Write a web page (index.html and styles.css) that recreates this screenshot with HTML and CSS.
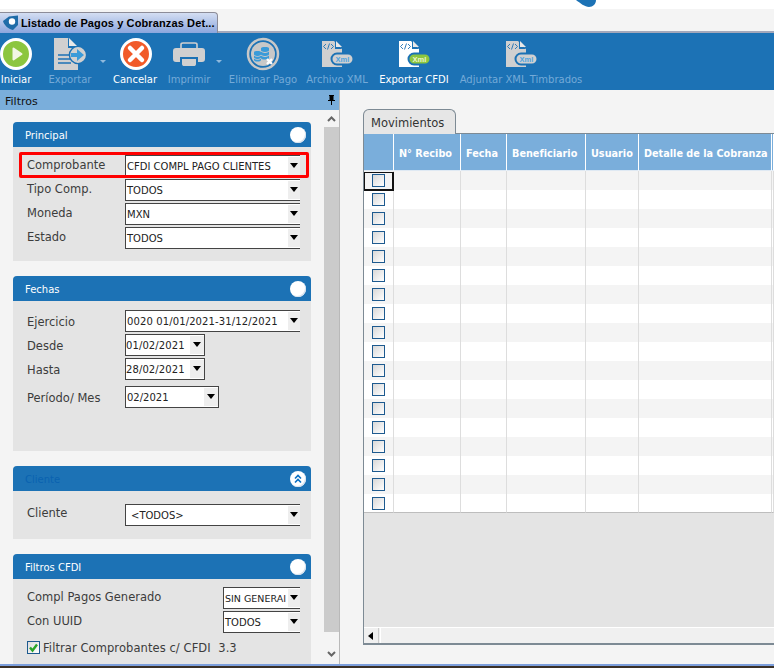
FILE: index.html
```html
<!DOCTYPE html>
<html lang="es">
<head>
<meta charset="utf-8">
<title>Listado de Pagos y Cobranzas</title>
<link rel="stylesheet" href="styles.css">
</head>
<body>
<div class="app">
  <svg class="corner-mark" width="22" height="8" viewBox="0 0 22 8"><path d="M0 0H20C20 4 17 7 13 7C9 7 4 3 0 0Z" fill="#1c72b5"/></svg>
  <div class="top-white"></div>
  <div class="tabstrip">
    <div class="doc-tab">
      <svg class="doc-tab-icon" width="15" height="16" viewBox="0 0 15 16"><path d="M0 6L6 1.500L15 0.500V10L10 15C5 14 1 10 0 6Z" fill="#1f6ca8"/><circle cx="9" cy="6.500" r="3.200" fill="#fff"/></svg>
      <span>Listado de Pagos y Cobranzas Det...</span>
    </div>
  </div>
  <div class="toolbar">
    <div class="tool">
      <svg width="34" height="34" viewBox="0 0 34 34"><circle cx="17" cy="17" r="14.500" fill="#8cc63f" stroke="#fff" stroke-width="3"/><path d="M14.500 11.500L22.500 17L14.500 22.500Z" fill="#f2f6e4" stroke="#f2f6e4" stroke-width="2" stroke-linejoin="round"/></svg>
      <span class="tool-label">Iniciar</span>
    </div>
    <div class="tool off">
      <svg width="34" height="34" viewBox="0 0 34 34"><path d="M1 1H15L25 11V33H1Z" fill="#d0d0d0"/><path d="M15 1V11H25Z" fill="#1c72b5"/><path d="M16 1L24 9H16Z" fill="#e8e8e8"/><path d="M5 18H18M5 22H18M5 26H18" stroke="#1c72b5" stroke-width="1.400"/><circle cx="25" cy="18" r="8.600" fill="#d0d0d0" stroke="#1c72b5" stroke-width="1.400"/><path d="M18 16H24V12L31 18L24 24V20H18Z" fill="#3a9bd9"/></svg>
      <span class="tool-label">Exportar</span>
      <i class="caret"></i>
    </div>
    <div class="tool">
      <svg class="nudge" width="34" height="34" viewBox="0 0 34 34"><circle cx="17" cy="17" r="14.500" fill="#f15a29" stroke="#fff" stroke-width="3"/><path d="M11 11L23 23M23 11L11 23" stroke="#fff" stroke-width="4.500" stroke-linecap="round"/></svg>
      <span class="tool-label">Cancelar</span>
    </div>
    <div class="tool off">
      <svg width="34" height="34" viewBox="0 0 34 34"><path d="M9 11V7.500C9 6.500 10 6 11 6H23C24 6 25 6.500 25 7.500V11" fill="none" stroke="#d0d0d0" stroke-width="1.600"/><path d="M4 11H30C32 11 33 12 33 14V22C33 24 32 25 30 25H26V20H8V25H4C2 25 1 24 1 22V14C1 12 2 11 4 11Z" fill="#d0d0d0"/><path d="M10 22H24V27C24 28.500 23 29 22 29H12C11 29 10 28.500 10 27Z" fill="#d0d0d0"/></svg>
      <span class="tool-label">Imprimir</span>
      <i class="caret caret-far"></i>
    </div>
    <div class="tool off">
      <svg width="34" height="34" viewBox="0 0 34 34"><circle cx="17" cy="17" r="15" fill="#1c72b5" stroke="#c8c8c8" stroke-width="2.500"/><circle cx="17" cy="17" r="12" fill="#c8c8c8"/><path d="M8 15C8 13.500 15 13.500 15 15V23C15 25 8 25 8 23Z" fill="#3a9bd9"/><path d="M15 11C15 9.500 23 9.500 23 11V21C23 23 15 23 15 21Z" fill="#3a9bd9"/><path d="M8 18C10 20 13 20 15 18M8 21C10 23 13 23 15 21M15 14C17 16 21 16 23 14M15 18C17 20 21 20 23 18" fill="none" stroke="#c8c8c8"/><path d="M21 22L26 27M26 22L21 27" stroke="#fff" stroke-width="2.400"/></svg>
      <span class="tool-label">Eliminar Pago</span>
    </div>
    <div class="tool off">
      <svg width="34" height="34" viewBox="0 0 34 34"><path d="M2 4H14L22 12V30H2Z" fill="#d0d0d0"/><path d="M15 4V12H22Z" fill="#1c72b5"/><path d="M16 4L22 10H16Z" fill="#e8e8e8"/><path d="M6 7L3.500 9.500L6 12M11 7L13.500 9.500L11 12M9.500 6.500L7.500 12.500" fill="none" stroke="#1c72b5" stroke-width="0.900"/><rect x="11.500" y="16.500" width="22" height="11" rx="5.500" fill="#d0d0d0" stroke="#1c72b5" stroke-width="2"/><text class="xml-text xml-off" x="22.500" y="24.500">Xml</text></svg>
      <span class="tool-label">Archivo XML</span>
    </div>
    <div class="tool">
      <svg width="34" height="34" viewBox="0 0 34 34"><path d="M2 4H14L22 12V30H2Z" fill="#fff"/><path d="M15 4V12H22Z" fill="#1c72b5"/><path d="M16 4L22 10H16Z" fill="#e8e8e8"/><path d="M6 7L3.500 9.500L6 12M11 7L13.500 9.500L11 12M9.500 6.500L7.500 12.500" fill="none" stroke="#1c72b5" stroke-width="0.900"/><rect x="11.500" y="16.500" width="22" height="11" rx="5.500" fill="#8cc63f" stroke="#1c72b5" stroke-width="2"/><text class="xml-text xml-on" x="22.500" y="24.500">Xml</text></svg>
      <span class="tool-label">Exportar CFDI</span>
    </div>
    <div class="tool off">
      <svg width="34" height="34" viewBox="0 0 34 34"><path d="M2 4H14L22 12V30H2Z" fill="#d0d0d0"/><path d="M15 4V12H22Z" fill="#1c72b5"/><path d="M16 4L22 10H16Z" fill="#e8e8e8"/><path d="M6 7L3.500 9.500L6 12M11 7L13.500 9.500L11 12M9.500 6.500L7.500 12.500" fill="none" stroke="#1c72b5" stroke-width="0.900"/><rect x="11.500" y="16.500" width="22" height="11" rx="5.500" fill="#d0d0d0" stroke="#1c72b5" stroke-width="2"/><text class="xml-text xml-off" x="22.500" y="24.500">Xml</text></svg>
      <span class="tool-label">Adjuntar XML Timbrados</span>
    </div>
  </div>
  <div class="main">
    <aside class="filters">
      <div class="filters-title">
        <span>Filtros</span>
        <svg width="9" height="11" viewBox="0 0 9 11"><path d="M2 0H7V1H6.500V5H8V6H5V10H4V6H1V5H2.500V1H2Z" fill="#000"/></svg>
      </div>
      <div class="filters-scroll">
        <div class="filters-content">
          <section class="group group-principal">
            <header class="group-head"><span>Principal</span><i class="group-dot"></i></header>
            <div class="group-body">
              <div class="field"><label>Comprobante</label><div class="select">CFDI COMPL PAGO CLIENTES<b></b></div></div>
              <div class="field"><label>Tipo Comp.</label><div class="select">TODOS<b></b></div></div>
              <div class="field"><label>Moneda</label><div class="select">MXN<b></b></div></div>
              <div class="field"><label>Estado</label><div class="select">TODOS<b></b></div></div>
            </div>
            <div class="highlight"></div>
          </section>
          <section class="group group-fechas">
            <header class="group-head"><span>Fechas</span><i class="group-dot"></i></header>
            <div class="group-body">
              <div class="field"><label>Ejercicio</label><div class="select select-wide-text">0020 01/01/2021-31/12/2021<b></b></div></div>
              <div class="field"><label>Desde</label><div class="select select-date">01/02/2021<b></b></div></div>
              <div class="field field-spaced"><label>Hasta</label><div class="select select-date">28/02/2021<b></b></div></div>
              <div class="field"><label>Período/ Mes</label><div class="select select-month">02/2021<b></b></div></div>
            </div>
          </section>
          <section class="group group-cliente">
            <header class="group-head head-muted"><span>Cliente</span>
              <i class="group-dot"><svg width="10" height="10" viewBox="0 0 10 10"><path d="M2 4.500L5 1.500L8 4.500M2 8.500L5 5.500L8 8.500" fill="none" stroke="#0a6fc2" stroke-width="1.600"/></svg></i>
            </header>
            <div class="group-body">
              <div class="field"><label>Cliente</label><div class="select select-pad">&lt;TODOS&gt;<b></b></div></div>
            </div>
          </section>
          <section class="group group-cfdi">
            <header class="group-head"><span>Filtros CFDI</span><i class="group-dot"></i></header>
            <div class="group-body">
              <div class="field field-wide"><label>Compl Pagos Generado</label><div class="select select-tight">SIN GENERAI<b></b></div></div>
              <div class="field field-wide"><label>Con UUID</label><div class="select">TODOS<b></b></div></div>
              <div class="check-row">
                <span class="check"><svg width="11" height="11" viewBox="0 0 11 11"><path d="M2 5.500L4.500 8.500L9 2.500" fill="none" stroke="#2aa52a" stroke-width="2.400"/></svg></span>
                <span class="check-text">Filtrar Comprobantes c/ CFDI&nbsp; 3.3</span>
              </div>
            </div>
          </section>
        </div>
        <div class="vscroll">
          <span class="vscroll-btn"><svg width="9" height="6" viewBox="0 0 9 6"><path d="M1 5L4.500 1.500L8 5" fill="none" stroke="#666" stroke-width="2"/></svg></span>
          <span class="vscroll-thumb"></span>
          <span class="vscroll-btn vscroll-end"><svg width="9" height="6" viewBox="0 0 9 6"><path d="M1 1L4.500 4.500L8 1" fill="none" stroke="#666" stroke-width="2"/></svg></span>
        </div>
      </div>
    </aside>
    <div class="content">
      <div class="pane-tab">Movimientos</div>
      <div class="pane">
        <table class="grid">
          <colgroup><col class="c0"><col class="c1"><col class="c2"><col class="c3"><col class="c4"><col class="c5"><col class="c6"></colgroup>
          <thead>
            <tr><th></th><th>N° Recibo</th><th>Fecha</th><th>Beneficiario</th><th>Usuario</th><th>Detalle de la Cobranza</th><th></th></tr>
          </thead>
          <tbody id="rows"></tbody>
        </table>
        <div class="pane-fill"></div>
        <div class="hscroll">
          <span class="hscroll-btn"><svg width="6" height="8" viewBox="0 0 6 8"><path d="M5 0V8L0 4Z" fill="#000"/></svg></span>
          <span class="hscroll-track"></span>
        </div>
      </div>
    </div>
  </div>
  <div class="footer-line"></div>
</div>
<script src="rows.js"></script>
</body>
</html>
```
FILE: rows.js
```js
var body = document.getElementById('rows');
var html = '';
for (var i = 0; i < 18; i++) {
  html += '<tr><td' + (i === 0 ? ' class="focus"' : '') + '><span class="box"></span></td><td></td><td></td><td></td><td></td><td></td><td></td></tr>';
}
body.innerHTML = html;
```
FILE: styles.css
```css
* { box-sizing: border-box; }
html, body { margin: 0; padding: 0; }
body { width: 774px; height: 668px; overflow: hidden; background: #f4f4f4; font-family: "DejaVu Sans", sans-serif; font-size: 11px; color: #333; }
.app { position: relative; width: 774px; height: 668px; display: flex; flex-direction: column; overflow: hidden; }
.corner-mark { position: absolute; left: 576px; top: 0; }
.top-white { height: 9px; background: #fff; flex: none; }
.tabstrip { height: 24px; flex: none; padding-top: 3px; background: #f4f4f4; border-bottom: 2px solid #a3a8bb; }
.doc-tab { width: 218px; height: 21px; display: flex; align-items: center; gap: 3px; padding: 0 0 0 3px; background: linear-gradient(#d4def2, #8ba6dd); border: 1px solid #8c8c98; border-left: 0; border-bottom: 0; border-radius: 0 4px 0 0; color: #000; font-family: "Liberation Sans", sans-serif; font-weight: bold; font-size: 11px; letter-spacing: 0.12px; white-space: nowrap; }
.doc-tab-icon { flex: none; }

.toolbar { height: 57px; flex: none; display: grid; grid-template-columns: 32px 76px 54px 54px 94px 54px 100px 114px; background: #1c72b5; color: #fff; }
.tool { position: relative; display: flex; flex-direction: column; align-items: center; padding-top: 4px; white-space: nowrap; }
.tool svg { flex: none; }
.tool svg.nudge { margin-left: 2px; }
.tool-label { margin-top: 2px; font-size: 10px; line-height: 13px; }
.off .tool-label { color: #74aad8; }
.caret { position: absolute; right: 2px; top: 27px; width: 0; height: 0; border: 3px solid transparent; border-top: 3px solid #8fb9dd; }
.caret-far { right: -6px; }
.xml-text { font-family: "Liberation Sans", sans-serif; font-size: 7.500px; font-weight: bold; text-anchor: middle; }
.xml-off { fill: #4fa3de; }
.xml-on { fill: #eef7d0; }

.main { flex: 1; min-height: 0; display: flex; }
.filters { width: 340px; flex: none; display: flex; flex-direction: column; border-right: 1px solid #b9b9b9; }
.filters-title { height: 20px; flex: none; display: flex; align-items: center; justify-content: space-between; padding: 0 3px 0 5px; background: #7aaedb; color: #111; font-size: 11px; }
.filters-title span { padding-top: 2px; }
.filters-scroll { flex: 1; min-height: 0; display: flex; }
.filters-content { width: 324px; flex: none; overflow: hidden; padding: 12px 13px 0 13px; display: flex; flex-direction: column; gap: 15px; }
.vscroll { width: 15px; flex: none; display: flex; flex-direction: column; }
.vscroll-btn { height: 17px; flex: none; display: flex; align-items: center; justify-content: center; }
.vscroll-end { height: 32px; padding-top: 11px; }
.vscroll-thumb { flex: 1; background: #cbcbcb; }

.group { position: relative; flex: none; background: #e4e4e4; border-radius: 4px 4px 0 0; }
.group-principal { height: 139px; }
.group-fechas { height: 175px; }
.group-cliente { height: 73px; }
.group-cfdi { height: 120px; }
.group-head { height: 25px; display: flex; align-items: center; justify-content: space-between; padding: 0 5px 0 12px; background: #1c72b5; color: #fff; border-radius: 4px 4px 0 0; font-size: 10px; }
.group-head span { padding-top: 2px; }
.head-muted { color: #0a62b0; }
.group-dot { width: 16px; height: 16px; flex: none; display: flex; align-items: center; justify-content: center; border-radius: 50%; background: #fff; box-shadow: inset -1px -1px 0 #d7e2ee; }
.group-body { padding: 8px 11px 0 14px; display: flex; flex-direction: column; gap: 2px; }
.group-fechas .group-body { padding-top: 9px; }
.group-cliente .group-body { padding-top: 13px; }
.group-cfdi .group-body { padding-top: 8px; }

.field { display: grid; grid-template-columns: 98px 1fr; align-items: center; }
.field-wide { grid-template-columns: 196px 1fr; }
.field-spaced { margin-bottom: 4px; }
.field label { color: #3c3c3c; font-size: 11.500px; line-height: 14px; margin-top: -2px; white-space: nowrap; }
.group-fechas .field label { margin-top: 1px; }
.group-cliente .field label { margin-top: -4px; }
.select { position: relative; height: 22px; display: flex; align-items: center; padding: 1px 14px 0 1px; background: #fff; border: 1px solid #444; border-right: 0; color: #222; font-size: 10px; white-space: nowrap; overflow: hidden; }
.select b { position: absolute; right: 0; top: 1px; bottom: 1px; width: 12px; background: #eee; }
.select b::after { content: ""; position: absolute; left: 2px; top: 6px; width: 0; height: 0; border: 4px solid transparent; border-top: 5px solid #000; }
.select-wide-text { letter-spacing: 0.12px; }
.select-tight { font-size: 9.500px; }
.select-date { width: 80px; padding-left: 0; border-right: 1px solid #444; letter-spacing: 0.1px; }
.select-month { width: 94px; border-right: 1px solid #444; }
.select-date b, .select-month b { width: 14px; }
.select-date b::after, .select-month b::after { left: 3px; }
.select-pad { padding-left: 5px; }
.check-row { display: flex; align-items: center; gap: 3px; margin-top: 4px; color: #3c3c3c; font-size: 11.500px; line-height: 14px; white-space: nowrap; }
.check-text { padding-top: 2px; letter-spacing: 0.08px; }
.check { width: 13px; height: 13px; display: flex; align-items: center; justify-content: center; border: 1px solid #1d5a8f; background: linear-gradient(135deg, #dcdcdc, #fff); }
.highlight { position: absolute; left: 6px; top: 30px; width: 290px; height: 26px; border: 3px solid #f00; border-radius: 2px; pointer-events: none; }

.content { flex: 1; min-width: 0; padding: 19px 0 0 23px; display: flex; flex-direction: column; }
.pane-tab { width: 93px; height: 25px; flex: none; margin-bottom: -1px; position: relative; padding: 6px 0 0 7px; background: #e6e6e6; border: 1px solid #7d8a94; border-bottom: 0; border-radius: 6px 6px 0 0; color: #333; font-size: 11.500px; z-index: 1; }
.pane { height: 512px; flex: none; display: flex; flex-direction: column; background: #e4e4e4; border: 1px solid #7d8a94; border-width: 1px 0 2px 1px; }
.grid { width: 410px; flex: none; table-layout: fixed; border-collapse: separate; border-spacing: 0; }
.c0 { width: 30px; } .c1 { width: 67px; } .c2 { width: 46px; } .c3 { width: 79px; } .c4 { width: 53px; } .c5 { width: 133px; }
.grid th { height: 37px; padding: 2px 0 0 5px; background: #7aaedb; border-right: 1px solid #fff; border-bottom: 1px solid #dfe9f3; color: #fff; font-size: 9.700px; text-align: left; white-space: nowrap; overflow: hidden; }
.grid td { height: 19px; padding: 0; border-right: 1px solid #ddd; background: #fff; }
.grid tbody tr:nth-child(odd) td { background: #f4f4f4; }
.grid tbody tr:last-child td { border-bottom: 1px solid #bdbdbd; }
.grid td.focus { position: relative; background: #fff; }
.grid td.focus::after { content: ""; position: absolute; left: 0; top: 1px; right: -1px; bottom: -1px; border: 1px solid #111; border-width: 1px 2px 2px 1px; }
.box { display: block; width: 13px; height: 13px; margin: 0 0 0 8px; border: 1px solid #1d5a8f; background: linear-gradient(135deg, #d8d8d8, #fff); }
.pane-fill { flex: 1; min-height: 0; }
.hscroll { height: 16px; flex: none; display: flex; background: #f0f0f0; border-top: 1px solid #fff; }
.hscroll-btn { width: 15px; flex: none; display: flex; align-items: center; justify-content: flex-start; padding-left: 4px; border-right: 1px solid #ccc; }
.hscroll-track { flex: 1; margin-left: 1px; border-left: 1px solid #fff; }
.footer-line { height: 4px; flex: none; background: #3a3026; border-top: 2px solid #7c9edb; }
```
